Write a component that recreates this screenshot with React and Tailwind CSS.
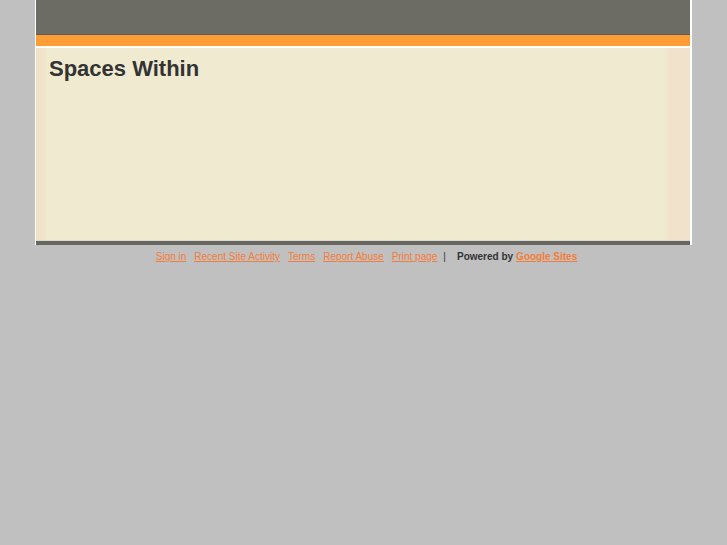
export default function App() {
  const links = ["Sign in", "Recent Site Activity", "Terms", "Report Abuse", "Print page"];
  return (
    <div className="min-h-[545px] w-full bg-[#c0c0c0] font-['Liberation_Sans',Arial,sans-serif]">
      <div className="ml-[35px] w-[657px] border-l border-r-2 border-white bg-white">
        <div className="h-[34px] bg-[#6c6c64]"></div>
        <div className="h-px bg-[#5e5e57]"></div>
        <div className="h-[11px] bg-[#fe9d35]"></div>
        <div className="h-[2px] bg-white"></div>
        <div className="flex h-[192px] bg-[#f0ebd0]">
          <div className="w-[10px] bg-gradient-to-r from-[#f1e0c8] to-[#f1e6cb]"></div>
          <div className="flex-1 pl-[3px] pt-[8px]">
            <h1 className="text-[22px] font-bold leading-[26px] text-[#333333]">Spaces Within</h1>
          </div>
          <div className="w-[26px] bg-gradient-to-r from-[#f0ebd0] to-[#f1e2cb] to-[20%]"></div>
        </div>
        <div className="h-px bg-[#d8d8d0]"></div>
        <div className="h-[4px] bg-[#67675f]"></div>
      </div>
      <div className="flex items-center justify-center pl-[6px] pt-[6px] text-[10px] leading-[12px]">
        <div className="flex items-center gap-2">
          {links.map((l) => (
            <a key={l} href="#" className="text-[#f37d38] underline">
              {l}
            </a>
          ))}
        </div>
        <span className="ml-[6px] text-[#333333]">|</span>
        <span className="ml-[11px] font-bold text-[#333333]">Powered by</span>
        <a href="#" className="ml-[3px] font-bold text-[#f37d38] underline">
          Google Sites
        </a>
      </div>
    </div>
  );
}
